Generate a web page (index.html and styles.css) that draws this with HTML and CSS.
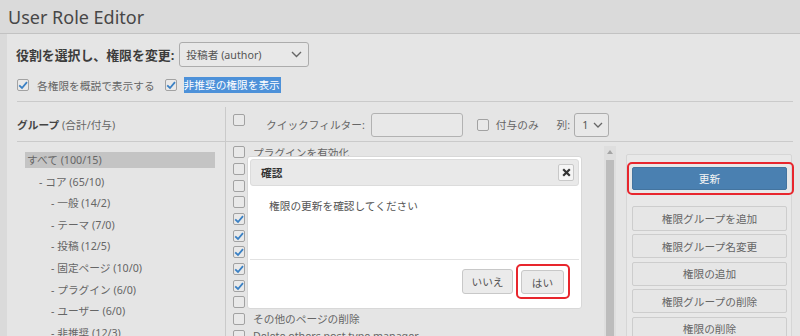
FILE: index.html
```html
<!DOCTYPE html>
<html lang="ja">
<head>
<meta charset="utf-8">
<title>User Role Editor</title>
<link rel="stylesheet" href="styles.css">
</head>
<body>
<div class="top"><h1>User Role Editor</h1></div>
<div class="panel">
  <div class="role-row">
    <span class="role-label">役割を選択し、権限を変更:</span>
    <div class="select role-select"><span>投稿者 (author)</span>
      <svg width="11" height="7" viewBox="0 0 11 7"><path d="M1 1 L5.5 5.5 L10 1" fill="none" stroke="#666" stroke-width="1.4"/></svg>
    </div>
  </div>
  <div class="opts-row">
    <span class="cb on"><svg viewBox="0 0 12 12"><path d="M2.2 6.3 L5 9 L10 3.2" fill="none" stroke="#3a80c4" stroke-width="1.8"/></svg></span>
    <span class="opt-label">各権限を概説で表示する</span>
    <span class="cb on cb2"><svg viewBox="0 0 12 12"><path d="M2.2 6.3 L5 9 L10 3.2" fill="none" stroke="#3a80c4" stroke-width="1.8"/></svg></span>
    <span class="opt-label hl">非推奨の権限を表示</span>
  </div>
  <div class="editor">
    <div class="left">
      <div class="left-head"><b>グループ</b> (合計/付与)</div>
      <ul class="tree">
        <li class="sel">すべて (100/15)</li>
        <li class="l1">- コア (65/10)</li>
        <li class="l2">- 一般 (14/2)</li>
        <li class="l2">- テーマ (7/0)</li>
        <li class="l2">- 投稿 (12/5)</li>
        <li class="l2">- 固定ページ (10/0)</li>
        <li class="l2">- プラグイン (6/0)</li>
        <li class="l2">- ユーザー (6/0)</li>
        <li class="l2">- 非推奨 (12/3)</li>
      </ul>
    </div>
    <div class="right">
      <div class="right-head">
        <span class="cb head-cb"></span>
        <span class="qf-label">クイックフィルター:</span>
        <span class="input"></span>
        <span class="cb grant-cb"></span>
        <span class="grant-label">付与のみ</span>
        <span class="col-label">列:</span>
        <div class="select col-select"><span>1</span>
          <svg width="10" height="6" viewBox="0 0 10 6"><path d="M1 1 L5 5 L9 1" fill="none" stroke="#666" stroke-width="1.3"/></svg>
        </div>
      </div>
      <div class="right-body">
        <ul class="caps">
          <li><span class="cb"></span>プラグインを有効化</li>
          <li><span class="cb"></span>ユーザーを追加</li>
          <li><span class="cb"></span>ユーザーを作成</li>
          <li><span class="cb"></span>投稿を削除</li>
          <li><span class="cb on"><svg viewBox="0 0 12 12"><path d="M2.2 6.3 L5 9 L10 3.2" fill="none" stroke="#3a80c4" stroke-width="1.8"/></svg></span>投稿の削除</li>
          <li><span class="cb on"><svg viewBox="0 0 12 12"><path d="M2.2 6.3 L5 9 L10 3.2" fill="none" stroke="#3a80c4" stroke-width="1.8"/></svg></span>公開済み投稿の削除</li>
          <li><span class="cb on"><svg viewBox="0 0 12 12"><path d="M2.2 6.3 L5 9 L10 3.2" fill="none" stroke="#3a80c4" stroke-width="1.8"/></svg></span>投稿の編集</li>
          <li><span class="cb on"><svg viewBox="0 0 12 12"><path d="M2.2 6.3 L5 9 L10 3.2" fill="none" stroke="#3a80c4" stroke-width="1.8"/></svg></span>公開済み投稿の編集</li>
          <li><span class="cb on"><svg viewBox="0 0 12 12"><path d="M2.2 6.3 L5 9 L10 3.2" fill="none" stroke="#3a80c4" stroke-width="1.8"/></svg></span>ファイルのアップロード</li>
          <li><span class="cb"></span>その他の投稿の削除</li>
          <li><span class="cb"></span>その他のページの削除</li>
          <li><span class="cb"></span>Delete others post type manager</li>
        </ul>
        <div class="scrollbar"><span class="arrow"></span><span class="thumb"></span></div>
        <div class="side">
          <button class="btn primary">更新</button>
          <button class="btn">権限グループを追加</button>
          <button class="btn">権限グループ名変更</button>
          <button class="btn">権限の追加</button>
          <button class="btn">権限グループの削除</button>
          <button class="btn">権限の削除</button>
        </div>
      </div>
    </div>
  </div>
</div>

<div class="dialog">
  <div class="dlg-title"><b>確認</b><span class="close"><svg width="9" height="9" viewBox="0 0 9 9"><path d="M1.2 1.2 L7.8 7.8 M7.8 1.2 L1.2 7.8" stroke="#333" stroke-width="2.2"/></svg></span></div>
  <div class="dlg-body">権限の更新を確認してください</div>
  <div class="dlg-foot">
    <button class="dbtn no">いいえ</button>
    <button class="dbtn yes">はい</button>
  </div>
</div>
</body>
</html>
```
FILE: styles.css
```css
* { box-sizing: border-box; }
html, body { margin: 0; padding: 0; }
body {
  width: 800px;
  height: 336px;
  overflow: hidden;
  position: relative;
  background: #dadada;
  font-family: "Noto Sans", "Noto Sans CJK JP", sans-serif;
  font-size: 10.7px;
  color: #666;
}
ul { list-style: none; margin: 0; padding: 0; }

.top {
  height: 34px;
  padding: 5px 0 0 8px;
  border-bottom: 1px solid #c2c2c2;
}
.top h1 {
  margin: 0;
  font-weight: 400;
  font-size: 18px;
  line-height: 24px;
  color: #474747;
}

.panel {
  margin-left: 7px;
  height: 302px;
  background: #e5e5e5;
  padding: 8px 7px 0 10px;
}

.role-row {
  display: flex;
  align-items: center;
  height: 25px;
  gap: 5px;
}
.role-label {
  margin-left: -1px;
  font-weight: 700;
  font-size: 12.9px;
  color: #3c3c3c;
}
.select {
  display: flex;
  align-items: center;
  justify-content: space-between;
  height: 25px;
  border: 1px solid #acacac;
  border-radius: 3px;
  background: #e8e8e8;
  color: #555;
}
.role-select { width: 130px; padding: 0 6px 0 6px; }

.opts-row {
  display: flex;
  align-items: center;
  height: 16px;
  margin-top: 10px;
}
.cb {
  display: inline-block;
  flex: none;
  width: 12px;
  height: 12px;
  border: 1px solid #a2a2a2;
  border-radius: 2px;
  background: #e9e9e9;
}
.cb svg { display: block; width: 12px; height: 12px; margin: -1px 0 0 -1px; }
.opt-label { margin-left: 8px; color: #666; }
.cb2 { margin-left: 10px; }
.hl {
  margin-left: 7px;
  height: 16px;
  line-height: 16px;
  background: #4d91d9;
  color: #fff;
  padding-right: 1px;
}

.editor {
  margin-top: 8px;
  border-top: 1px solid #cacaca;
  display: grid;
  grid-template-columns: 208px 1fr;
  padding-top: 5px;
}
.left-head {
  height: 35px;
  border-bottom: 1px solid #cacaca;
  display: flex;
  align-items: center;
  gap: 3px;
  color: #666;
}
.left-head b { color: #444; }
.tree {
  padding: 10px 10px 0 8px;
  display: flex;
  flex-direction: column;
  gap: 5.6px;
}
.tree li {
  height: 16px;
  line-height: 16px;
  padding-left: 2px;
  white-space: nowrap;
}
.tree .sel { background: #c4c4c4; }
.tree .l1 { padding-left: 14px; }
.tree .l2 { padding-left: 26px; }

.right {
  border-left: 1px solid #cacaca;
  min-height: 240px;
}
.right-head {
  height: 35px;
  border-bottom: 1px solid #cacaca;
  display: flex;
  align-items: center;
  padding-left: 7px;
  padding-top: 1px;
}
.head-cb { margin-top: -9px; }
.qf-label { margin-left: 21px; }
.input {
  width: 92px;
  height: 24px;
  margin-left: 6px;
  border: 1px solid #b2b2b2;
  border-radius: 3px;
  background: #e8e8e8;
}
.grant-cb { margin-left: 14px; }
.grant-label { margin-left: 7px; }
.col-label { margin-left: 18px; }
.col-select { width: 35px; height: 24px; margin-left: 4px; padding: 0 5px 0 7px; }

.right-body {
  display: flex;
  height: 200px;
}
.caps {
  width: 378px;
  padding: 2px 0 0 7px;
}
.caps li {
  height: 16.67px;
  display: flex;
  align-items: center;
  white-space: nowrap;
  overflow: hidden;
}
.caps li .cb { margin-right: 8px; }

.scrollbar {
  position: relative;
  width: 12px;
  margin-top: 4px;
  background: #dedede;
}
.scrollbar .arrow {
  position: absolute;
  left: 3px;
  top: 4px;
  width: 0;
  height: 0;
  border-left: 3px solid transparent;
  border-right: 3px solid transparent;
  border-bottom: 4px solid #a4a4a4;
}
.scrollbar .thumb {
  position: absolute;
  left: 2px;
  right: 2px;
  top: 14px;
  bottom: 0;
  background: #bcbcbc;
}

.side {
  width: 166px;
  margin-left: 10px;
  margin-top: 12px;
  border: 1px solid #d6d6d6;
  border-radius: 2px;
  background: #e8e8e8;
  padding: 12px 4px 0 5px;
  display: flex;
  flex-direction: column;
  gap: 3.3px;
}
.btn {
  height: 26px;
  margin: 0;
  border: 1px solid #cdcdcd;
  border-radius: 2px;
  background: #e6e6e6;
  font: inherit;
  color: #666;
  padding: 0;
}
.btn.primary {
  position: relative;
  height: 25px;
  margin-bottom: 12.7px;
  background: #4a80b1;
  border-color: #44749f;
  color: #f4f4f4;
}
.btn.primary::after {
  content: "";
  position: absolute;
  left: -6px;
  right: -8px;
  top: -6px;
  bottom: -6px;
  border: 2px solid #e8262d;
  border-radius: 5px;
}

.dialog {
  position: absolute;
  left: 247px;
  top: 156px;
  width: 335px;
  height: 153px;
  background: #fff;
  border: 1px solid #d8d8d8;
  border-radius: 3px;
  padding: 2px;
}
.dlg-title {
  height: 27px;
  display: flex;
  align-items: center;
  justify-content: space-between;
  padding: 0 4px 0 10px;
  background: #e9e9e9;
  border: 1px solid #dcdcdc;
  border-radius: 3px;
  color: #333;
}
.close {
  width: 16px;
  height: 17px;
  display: flex;
  align-items: center;
  justify-content: center;
  background: #f5f5f5;
  border: 1px solid #c8c8c8;
  border-radius: 2px;
}
.dlg-body {
  height: 73px;
  padding: 13px 0 0 19px;
  line-height: 14px;
  color: #555;
}
.dlg-foot {
  border-top: 1px solid #e2e2e2;
  display: flex;
  justify-content: flex-end;
  align-items: flex-start;
  gap: 8px;
  padding: 9px 15px 0 0;
}
.dbtn {
  margin: 0;
  height: 25px;
  border: 1px solid #c8c8c8;
  border-radius: 3px;
  background: #ebebeb;
  font: inherit;
  color: #555;
  padding: 0;
}
.dbtn.no { width: 51px; }
.dbtn.yes {
  position: relative;
  width: 43px;
  height: 24px;
  margin-top: 1px;
}
.dbtn.yes::after {
  content: "";
  position: absolute;
  left: -6px;
  right: -7px;
  top: -7px;
  bottom: -6px;
  border: 2px solid #e8262d;
  border-radius: 5px;
}
```
